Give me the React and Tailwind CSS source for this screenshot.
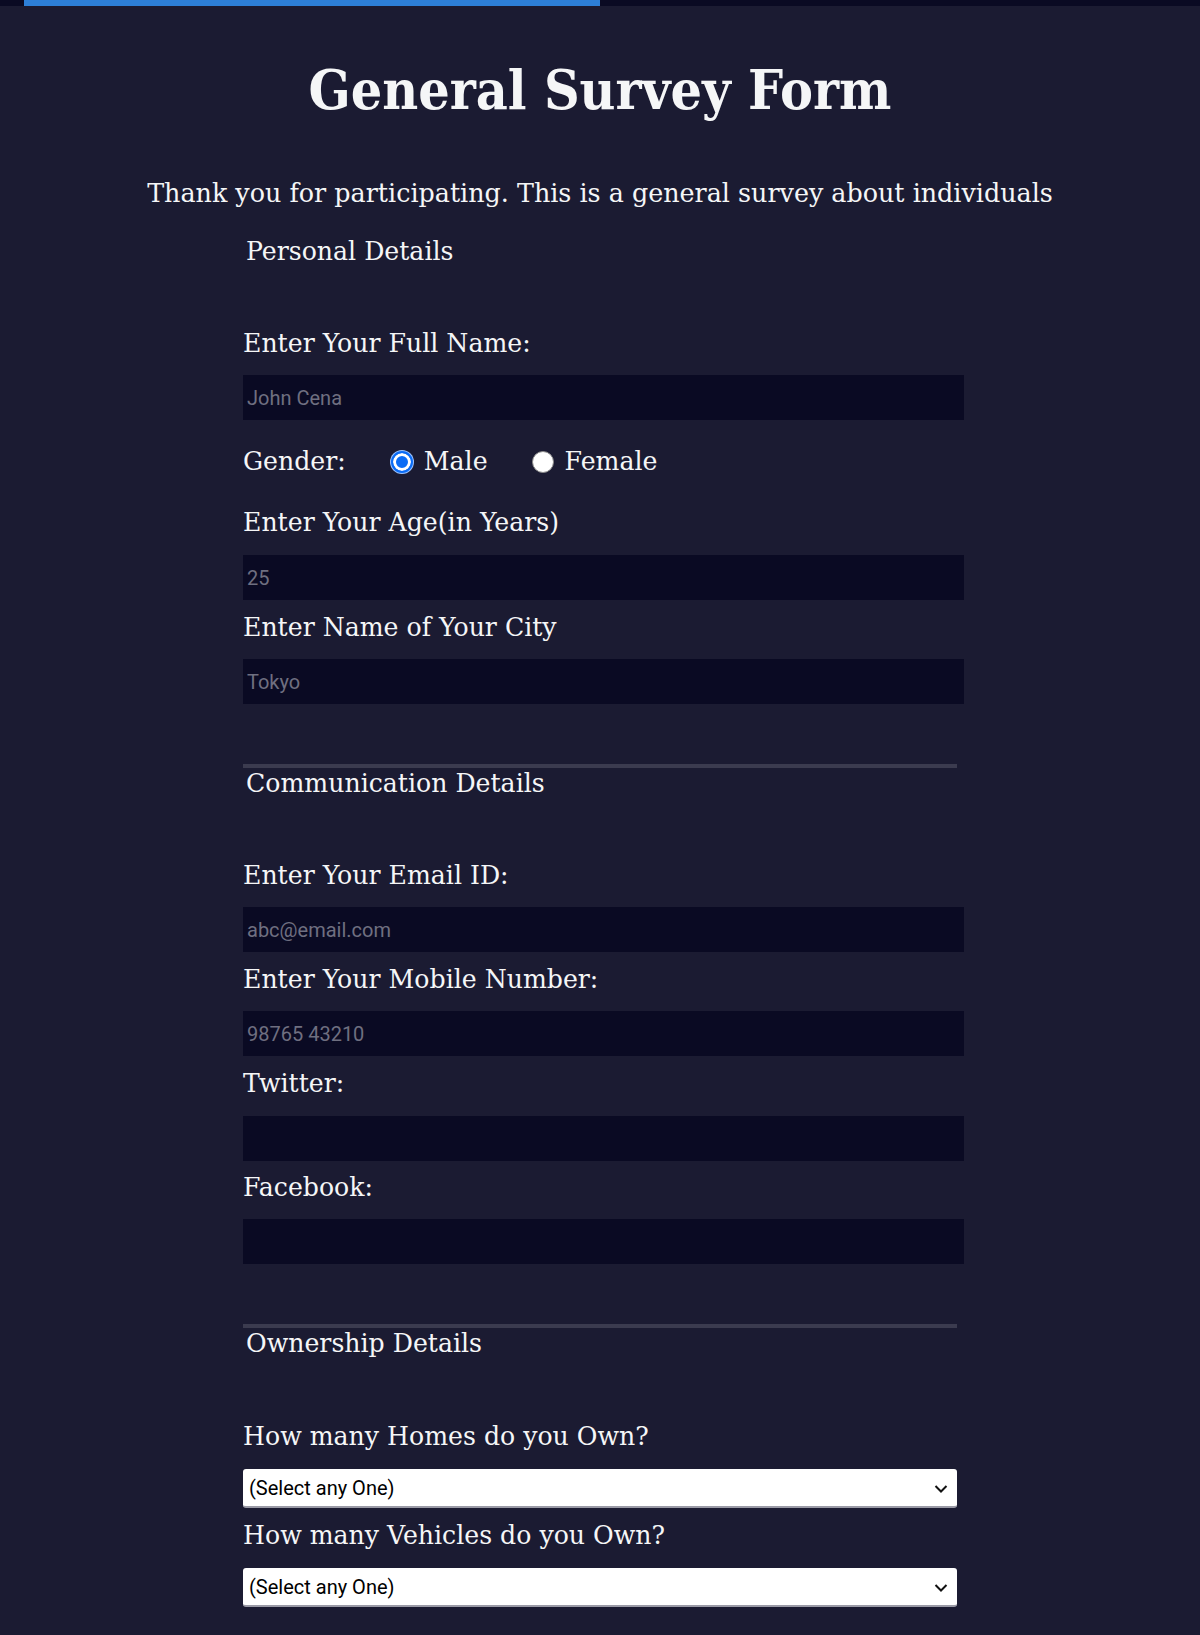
import React from 'react'

const serif = { fontFamily: '"DejaVu Serif", "Liberation Serif", serif' }

const Label = ({ children, className = '' }) => (
  <label className={`block text-[25.2px] leading-[32px] text-[#f5f6f7] ${className}`}>{children}</label>
)

const TextInput = ({ placeholder, className = '', type = 'text' }) => (
  <input
    type={type}
    placeholder={placeholder}
    className={`block w-[721px] h-[45px] bg-[#0a0a23] px-[4px] text-[20px] text-[#f5f6f7] placeholder:text-[#6f6f80] outline-none font-['Roboto',sans-serif] ${className}`}
  />
)

const Legend = ({ children }) => (
  <div className="pl-[3px] text-[25.2px] leading-[32px] text-[#f5f6f7]">{children}</div>
)

const Chevron = () => (
  <svg className="pointer-events-none absolute right-[9px] top-1/2 -translate-y-1/2" width="14" height="9" viewBox="0 0 14 9" fill="none">
    <path d="M1.5 1.5 7 7l5.5-5.5" stroke="#111" strokeWidth="2" />
  </svg>
)

const Select = ({ className = '' }) => (
  <div className={`relative w-[714px] ${className}`}>
    <select className="block w-full h-[39px] appearance-none rounded-[3px] bg-white border-b-2 border-[#9a9aa6] pl-[6px] text-[20px] text-black font-['Roboto',sans-serif] outline-none">
      <option>(Select any One)</option>
      <option>1</option>
      <option>2</option>
      <option>3+</option>
    </select>
    <Chevron />
  </div>
)

const Radio = ({ name, label, checked }) => (
  <label className="flex items-center">
    <input
      type="radio"
      name={name}
      defaultChecked={checked}
      className="appearance-none w-[22px] h-[22px] rounded-full bg-white border border-[#8a8a8a] checked:border-2 checked:border-[#0b6cf5] checked:bg-[#0b6cf5] checked:shadow-[inset_0_0_0_3px_#fff,0_0_0_1px_#9cc3ff]"
    />
    <span className="ml-[11px]">{label}</span>
  </label>
)

const App = () => {
  return (
    <div className="min-h-[1635px] bg-[#1b1b32] text-[#f5f6f7]" style={serif}>
      <div className="h-[6px] bg-[#0a0a23]">
        <div className="ml-[24px] h-full w-[576px] bg-[#2d7fd8]" />
      </div>

      <h1 className="mt-[54px] text-center text-[55px] leading-[60px] font-bold font-stretch-condensed">General Survey Form</h1>
      <p className="mt-[57px] text-center text-[25.4px] leading-[32px]">
        Thank you for participating. This is a general survey about individuals
      </p>

      <form className="mx-auto mt-[27px] w-[714px]">
        <section>
          <Legend>Personal Details</Legend>
          <Label className="mt-[60px]">Enter Your Full Name:</Label>
          <TextInput placeholder="John Cena" className="mt-[15px]" />

          <div className="mt-[26px] flex h-[32px] items-center text-[25.2px]">
            <span className="mr-[45px]">Gender:</span>
            <Radio name="gender" label="Male" checked />
            <span className="w-[44px]" />
            <Radio name="gender" label="Female" />
          </div>

          <Label className="mt-[29px]">Enter Your Age(in Years)</Label>
          <TextInput type="number" placeholder="25" className="mt-[16px]" />
          <Label className="mt-[12px]">Enter Name of Your City</Label>
          <TextInput placeholder="Tokyo" className="mt-[15px]" />
          <div className="mt-[60px] h-[4px] bg-[#3b3b4f]" />
        </section>

        <section>
          <Legend>Communication Details</Legend>
          <Label className="mt-[60px]">Enter Your Email ID:</Label>
          <TextInput type="email" placeholder="abc@email.com" className="mt-[15px]" />
          <Label className="mt-[12px]">Enter Your Mobile Number:</Label>
          <TextInput placeholder="98765 43210" className="mt-[15px]" />
          <Label className="mt-[12px]">Twitter:</Label>
          <TextInput className="mt-[16px]" />
          <Label className="mt-[11px]">Facebook:</Label>
          <TextInput className="mt-[15px]" />
          <div className="mt-[60px] h-[4px] bg-[#3b3b4f]" />
        </section>

        <section>
          <Legend>Ownership Details</Legend>
          <Label className="mt-[61px]">How many Homes do you Own?</Label>
          <Select className="mt-[16px]" />
          <Label className="mt-[12px]">How many Vehicles do you Own?</Label>
          <Select className="mt-[16px]" />
        </section>
      </form>
    </div>
  )
}

export default App
